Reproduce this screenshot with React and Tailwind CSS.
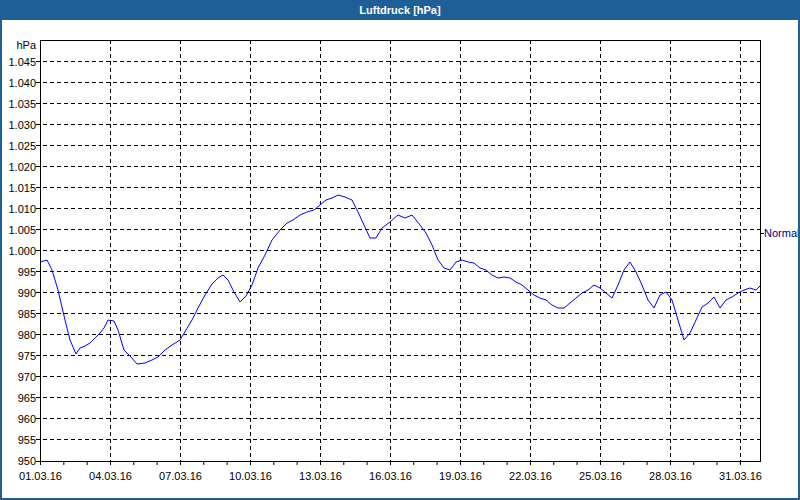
const pts = "40,262 47,260 52,270 58,290 65,320 70,340 76,354 80,348 85,346 90,343 95,338 100,333 104,328 108,320 114,321 118,330 124,350 130,356 137,364 145,363 152,360 158,357 165,350 172,345 180,340 186,330 192,320 198,308 205,295 212,284 218,278 223,275 228,280 234,292 240,302 246,296 252,285 258,268 265,255 272,240 280,230 287,223 293,220 300,215 307,212 314,210 320,205 326,200 332,198 338,195 345,197 352,200 358,212 364,225 370,238 376,238 382,228 390,222 398,215 405,218 412,215 420,225 426,233 432,245 438,260 444,268 450,270 456,262 462,260 468,262 474,263 480,268 486,270 492,275 498,278 504,277 510,278 516,282 522,285 528,290 534,295 540,298 546,300 552,305 558,308 564,308 570,303 576,298 582,293 588,290 594,285 600,288 606,293 612,298 618,285 624,270 630,262 636,272 642,285 648,300 654,308 660,295 666,292 672,300 678,320 684,340 690,333 696,320 702,307 708,303 714,297 720,308 726,300 732,297 738,293 744,290 750,288 756,290 760,286";

const yVals = Array.from({ length: 19 }, (_, i) => 1045 - i * 5);
const fmt = (v) => (v >= 1000 ? "1." + String(v - 1000).padStart(3, "0") : String(v));
const dates = ["01.03.16", "04.03.16", "07.03.16", "10.03.16", "13.03.16", "16.03.16", "19.03.16", "22.03.16", "25.03.16", "28.03.16", "31.03.16"];

export default function App() {
  return (
    <div className="w-[800px] h-[500px] flex flex-col bg-[#1f5f98] px-[2px] pb-[2px]" style={{ fontFamily: "'Liberation Sans', Arial, sans-serif" }}>
      <div className="h-[20px] flex items-center justify-center text-white text-[11px] font-bold">Luftdruck [hPa]</div>
      <div className="flex-1 bg-white">
        <svg width="796" height="478" viewBox="2 20 796 478" className="block" fontSize="11" fill="#000">
          {yVals.map((v, i) => {
            const y = 61 + i * 21 + 0.5;
            return (
              <g key={v}>
                <line x1="36" x2="760" y1={y} y2={y} stroke="#000" strokeDasharray="4 3" />
                <text x="36" y={y + 4} textAnchor="end">{fmt(v)}</text>
              </g>
            );
          })}
          <text x="36" y="49" textAnchor="end">hPa</text>
          <text x="36" y="465" textAnchor="end">950</text>
          {dates.map((d, i) => {
            const x = 40 + i * 70 + 0.5;
            return (
              <g key={d}>
                {i > 0 && <line x1={x} x2={x} y1="40" y2="465" stroke="#000" strokeDasharray="4 3" />}
                <text x={x} y="480" textAnchor="middle">{d}</text>
              </g>
            );
          })}
          {Array.from({ length: 31 }, (_, i) => (
            <line key={i} x1={40.5 + i * 23.33} x2={40.5 + i * 23.33} y1="461" y2="465" stroke="#000" />
          ))}
          <line x1="40.5" x2="40.5" y1="40" y2="465" stroke="#000" />
          <line x1="36" x2="760" y1="461.5" y2="461.5" stroke="#000" />
          <line x1="40" x2="760" y1="40.5" y2="40.5" stroke="#000" />
          <line x1="760.5" x2="760.5" y1="40" y2="462" stroke="#000" />
          <line x1="760" x2="764" y1="233.5" y2="233.5" stroke="#000" />
          <text x="764" y="237" fill="#000080">Normal</text>
          <polyline points={pts} fill="none" stroke="#0000ff" strokeWidth="1" />
        </svg>
      </div>
    </div>
  );
}
